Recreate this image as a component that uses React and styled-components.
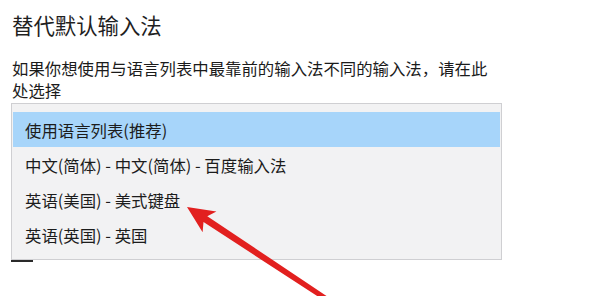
import React from 'react'
import styled, { createGlobalStyle } from 'styled-components'

const GlobalStyle = createGlobalStyle`
  html, body {
    margin: 0;
    padding: 0;
    background: #ffffff;
  }
  body {
    font-family: 'Noto Sans CJK SC', 'Noto Sans', sans-serif;
    color: #1b1b1b;
  }
`

const Page = styled.div`
  position: relative;
  width: 600px;
  height: 296px;
  overflow: hidden;
  padding: 11px 0 0 11px;
  box-sizing: border-box;
`

const Title = styled.h1`
  margin: 0 0 0 1px;
  font-size: 21.4px;
  font-weight: 400;
  line-height: 28px;
  color: #1f1f1f;
`

const Hint = styled.p`
  margin: 18px 0 0 1px;
  width: 490px;
  font-size: 16.4px;
  line-height: 22px;
  color: #1b1b1b;
`

const Dropdown = styled.ul`
  list-style: none;
  margin: 2px 0 0 0;
  padding: 8px 1px 7px 1px;
  width: 491px;
  box-sizing: border-box;
  background: #f2f2f3;
  border: 1px solid #cfcfd2;
`

const Option = styled.li`
  height: 35px;
  display: flex;
  align-items: center;
  padding-left: 12px;
  font-size: 16.4px;
  color: #1c1c1c;
  background: ${(p) => (p.selected ? '#a7d5fa' : 'transparent')};
`

const ComboEdge = styled.div`
  width: 22px;
  height: 2px;
  background: #2a2a2a;
`

const Arrow = styled.svg`
  position: absolute;
  left: 0;
  top: 0;
  width: 600px;
  height: 296px;
  pointer-events: none;
`

const options = [
  '使用语言列表(推荐)',
  '中文(简体) - 中文(简体) - 百度输入法',
  '英语(美国) - 美式键盘',
  '英语(英国) - 英国',
]

const App = () => {
  return (
    <>
      <GlobalStyle />
      <Page>
        <Title>替代默认输入法</Title>
        <Hint>如果你想使用与语言列表中最靠前的输入法不同的输入法，请在此处选择</Hint>
        <Dropdown>
          {options.map((item, i) => (
            <Option key={item} selected={i === 0}>
              {item}
            </Option>
          ))}
        </Dropdown>
        <ComboEdge />
        <Arrow viewBox='0 0 600 296'>
          <polygon
            points='187,207 216.4,211.5 207.3,216.2 330.4,298.6 327.6,302.8 203.5,222 202.6,232.3'
            fill='#e2201f'
          />
        </Arrow>
      </Page>
    </>
  )
}

export default App
